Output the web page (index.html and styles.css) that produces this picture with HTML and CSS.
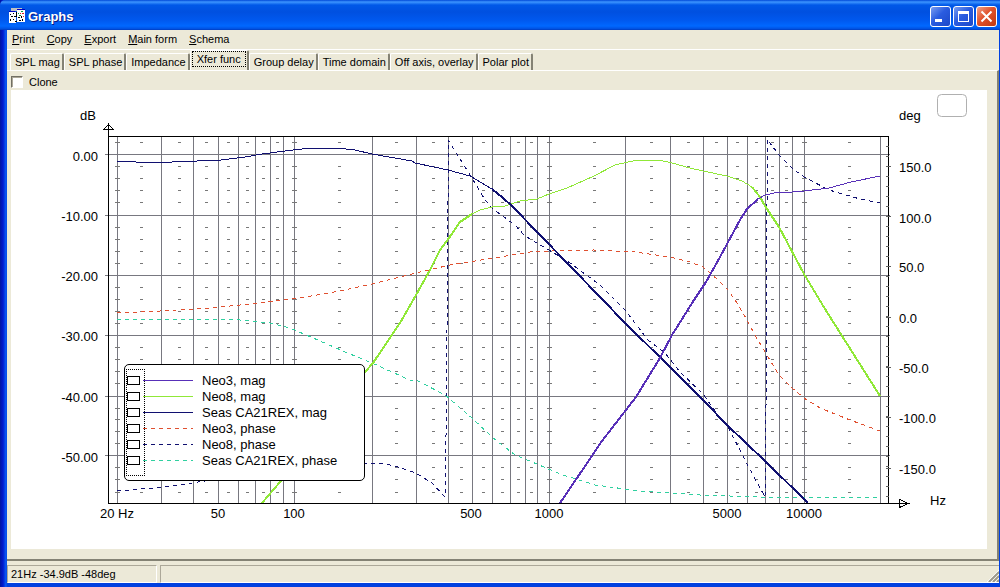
FILE: index.html
```html
<!DOCTYPE html>
<html lang="en">
<head>
    <meta charset="UTF-8">
    <meta name="viewport" content="width=device-width, initial-scale=1.0">
    <title>Graphs</title>
    <link rel="stylesheet" href="styles.css">
</head>
<body>
    <div class="window">
        <header class="titlebar">
            <svg class="app-icon" width="16" height="16" viewBox="0 0 16 16" shape-rendering="crispEdges">
                <path fill="#c0c0c0" d="M2 0h11v3H2z"/>
                <path fill="#fff" d="M0 4h7v11H0zM8 2h8v12H8z"/>
                <path fill="#0000c0" d="M0 3h6v1H0zM8 1h8v1H8z"/>
                <path fill="#000" d="M1 6h1v1H1zM4 5h1v1H4zM2 8h2v1H2zM5 8h2v1H5zM1 11h1v2H1zM4 11h1v1H4zM6 13h2v1H6zM7 4h1v5H7zM9 9h2v1H9zM12 8h1v2H12zM10 12h2v1h-2zM13 11h1v2h-1z"/>
                <path fill="#00a040" d="M9 5h1v1H9zM12 3h2v1h-2zM10 7h2v1h-2z"/>
                <path fill="#e02020" d="M11 5h1v1h-1zM13 5h2v1h-2zM14 8h1v1h-1z"/>
            </svg>
            <h1>Graphs</h1>
            <div class="window-buttons">
                <button type="button" aria-label="Minimize">
                    <svg width="19" height="19" viewBox="0 0 19 19"><path fill="#fff" d="M4 12h7v3H4z"/></svg>
                </button>
                <button type="button" aria-label="Maximize">
                    <svg width="19" height="19" viewBox="0 0 19 19"><path fill="#fff" fill-rule="evenodd" d="M4 4h11v11H4zM5 7v7h9V7z"/></svg>
                </button>
                <button type="button" class="close" aria-label="Close">
                    <svg width="19" height="19" viewBox="0 0 19 19"><path stroke="#fff" stroke-width="2" d="M4.5 4.5l10 10M14.5 4.5l-10 10"/></svg>
                </button>
            </div>
        </header>

        <nav class="menu">
            <button type="button"><u>P</u>rint</button>
            <button type="button"><u>C</u>opy</button>
            <button type="button"><u>E</u>xport</button>
            <button type="button"><u>M</u>ain form</button>
            <button type="button"><u>S</u>chema</button>
        </nav>

        <div class="tabs" role="tablist">
            <button type="button" role="tab">SPL mag</button>
            <button type="button" role="tab">SPL phase</button>
            <button type="button" role="tab">Impedance</button>
            <button type="button" role="tab" class="selected" aria-selected="true"><span>Xfer func</span></button>
            <button type="button" role="tab">Group delay</button>
            <button type="button" role="tab">Time domain</button>
            <button type="button" role="tab">Off axis, overlay</button>
            <button type="button" role="tab">Polar plot</button>
        </div>

        <main class="pane">
            <div class="clone">
                <input type="checkbox" id="clone">
                <label for="clone">Clone</label>
            </div>

            <div class="chart">
                <svg class="plot" viewBox="11 90 976 459">
                    <rect class="stub" x="937.5" y="94.5" width="29" height="22" rx="4"/>

                    <!-- log frequency grid -->
                    <path class="grid" d="M117.5 136v367M161.5 136v367M193.5 136v367M218.5 136v367M238.5 136v367M255.5 136v367M270.5 136v367M283.5 136v367M294.5 136v367M372.5 136v367M416.5 136v367M448.5 136v367M472.5 136v367M492.5 136v367M510.5 136v367M525.5 136v367M537.5 136v367M549.5 136v367M625.5 136v367M670.5 136v367M703.5 136v367M727.5 136v367M747.5 136v367M765.5 136v367M779.5 136v367M792.5 136v367M804.5 136v367M880.5 136v367"/>
                    <path class="grid" d="M105 154.5h785M105 215.5h785M105 275.5h785M105 335.5h785M105 396.5h785M105 455.5h785"/>
                    <path class="minor" d="M141.5 142v351M179.5 142v351M206.5 142v351M228.5 142v351M247.5 142v351M263.5 142v351M277.5 142v351M339.5 142v351M396.5 142v351M433.5 142v351M461.5 142v351M483.5 142v351M502.5 142v351M518.5 142v351M531.5 142v351M594.5 142v351M651.5 142v351M688.5 142v351M716.5 142v351M737.5 142v351M756.5 142v351M772.5 142v351M786.5 142v351M849.5 142v351"/>
                    <path class="minor wide" d="M117.5 142v351M294.5 142v351M549.5 142v351M804.5 142v351"/>

                    <!-- axes -->
                    <path class="axis" d="M108 136.5h781M108.5 123v380M888.5 136v367M108 503.5h801"/>
                    <path class="axis" d="M108.5 124.5l5 5h-10zM899.5 499.5l9 4l-9 4z"/>
                    <path class="degrees" d="M887.5 146v352"/>
                    <path class="degrees major" d="M888.5 166v303"/>

                    <!-- phase -->
                    <polyline class="neo3 phase" points="117,313 160,311 210,308 250,304 300,298 340,291 372,284 416,273 450,265 500,257 530,252 549,251 594,250 635,252 670,257 690,262 703,267 717,279 728,290 737,303 747,320 755,335 765,352 779,375 792,388 804,398 820,408 850,420 880,431"/>
                    <polyline class="neo8-phase phase" points="117,491 165,487 205,481 225,478 280,469 330,464 365,463 380,463 395,466 416,473 432,483 445,497 446,437 447,330 448,200 448,140 460,159 472,178 485,200 493,209 515,225 525,236 537,243 549,250 570,263 600,285 625,310 648,340 665,353 680,372 703,394 718,415 727,425 747,464 765,497 766,405 767,200 767,139 779,155 792,168 804,177 829,190 860,199 880,203"/>
                    <polyline class="seas-phase phase" points="117,319 210,319 240,320 270,323 290,328 320,341 350,354 372,363 412,381 416,380 445,395 472,418 492,437 515,455 537,464 560,474 595,485 640,491 700,495 760,497 880,497"/>

                    <!-- magnitude, the steep parts are drawn heavier -->
                    <polyline class="neo8-mag" points="472,214 480,210 492,207 505,206 520,201 537,199 549,194 567,188 594,176 615,165 637,160 659,160 672,163 690,168 703,171 727,176 742,181 752,187"/>
                    <polyline class="neo8-mag heavy" points="262,503 280,482 330,416 365,372 373,363 400,323 416,295 430,270 440,250 449,238 460,222 472,214"/>
                    <polyline class="neo8-mag heavy" points="752,187 760,197 765,206 779,227 804,274 822,304 832,320 880,396"/>
                    <polyline class="seas-mag" points="117,161 135,161 136,162 172,162 197,161 221,160 245,157 262,154 285,151 310,148 337,148 355,150 372,154 412,161 415,163 448,170 470,176 492,189"/>
                    <polyline class="seas-mag heavy" points="492,189 503,198 512,206 540,235 602,299 625,323 670,367 703,400 727,425 765,461 808,503"/>
                    <polyline class="neo3-mag heavy" points="560,503 577,478 602,441 636,397 660,358 672,335 694,300 706,282 720,257 740,220 747,209 758,199"/>
                    <polyline class="neo3-mag" points="758,199 765,195 779,192 792,192 804,191 829,188 851,182 880,176"/>

                    <g class="labels">
                        <text x="80" y="120">dB</text>
                        <text x="899" y="120">deg</text>
                        <text x="930" y="505">Hz</text>
                    </g>
                    <g class="labels end">
                        <text x="98" y="161">0.00</text>
                        <text x="98" y="221">-10.00</text>
                        <text x="98" y="281">-20.00</text>
                        <text x="98" y="341">-30.00</text>
                        <text x="98" y="402">-40.00</text>
                        <text x="98" y="462">-50.00</text>
                    </g>
                    <g class="labels">
                        <text x="899" y="172">150.0</text>
                        <text x="899" y="223">100.0</text>
                        <text x="899" y="272">50.0</text>
                        <text x="899" y="323">0.0</text>
                        <text x="899" y="373">-50.0</text>
                        <text x="899" y="423">-100.0</text>
                        <text x="899" y="474">-150.0</text>
                    </g>
                    <g class="labels middle">
                        <text x="117" y="518">20 Hz</text>
                        <text x="218" y="518">50</text>
                        <text x="294" y="518">100</text>
                        <text x="471" y="518">500</text>
                        <text x="549" y="518">1000</text>
                        <text x="727" y="518">5000</text>
                        <text x="804" y="518">10000</text>
                    </g>
                </svg>

                <div class="legend">
                    <label><input type="checkbox"><i class="line purple"></i>Neo3, mag</label>
                    <label><input type="checkbox"><i class="line green"></i>Neo8, mag</label>
                    <label><input type="checkbox"><i class="line navy"></i>Seas CA21REX, mag</label>
                    <label><input type="checkbox"><i class="line dashed orange"></i>Neo3, phase</label>
                    <label><input type="checkbox"><i class="line dashed navy"></i>Neo8, phase</label>
                    <label><input type="checkbox"><i class="line dashed teal"></i>Seas CA21REX, phase</label>
                </div>
            </div>
        </main>

        <footer class="statusbar">
            <div class="status">21Hz -34.9dB -48deg</div>
            <div class="status fill">
                <svg width="12" height="12" viewBox="0 0 12 12"><path stroke="#fff" d="M0 12L12 0M4 12l8-8M8 12l4-4"/><path stroke="#9d9a8a" stroke-width="2" d="M2 12L12 2M6 12l6-6M10 12l2-2"/></svg>
            </div>
        </footer>
    </div>
</body>
</html>
```
FILE: styles.css
```css
* {
    box-sizing: border-box;
}
body {
    margin: 0;
    background-color: #0a246a;
    font-family: "Liberation Sans", Arial, sans-serif;
    font-size: 11px;
    color: #000;
}
button {
    margin: 0;
    padding: 0;
    border: none;
    background: none;
    font: inherit;
    color: inherit;
}
.window {
    display: flex;
    flex-direction: column;
    min-height: 100vh;
    background-color: #ece9d8;
    border-style: solid;
    border-width: 0 1px 4px 7px;
    border-image: linear-gradient(to right, #0014a0 0, #0019cf 3px, #0a5cf5 6px, #0040e0 7px) 0 1 4 7;
}

/* title bar */
.titlebar {
    display: flex;
    align-items: center;
    height: 30px;
    margin: 0 -1px 0 -7px;
    padding: 2px 3px 0 9px;
    background: linear-gradient(#0048d8 0, #3d95ff 2px, #0058e8 5px, #0050e0 12px, #0058ee 20px, #0068ff 26px, #0050e0 29px, #0038b8 30px);
    border-radius: 5px 0 0 0;
}
.titlebar h1 {
    flex: 1;
    margin: 2px 0 0 3px;
    font-size: 13px;
    line-height: 16px;
    color: #fff;
    text-shadow: 1px 1px #0a1883;
}
.window-buttons {
    display: flex;
    gap: 2px;
}
.window-buttons button {
    width: 21px;
    height: 21px;
    border: 1px solid #fff;
    border-radius: 3px;
    background: linear-gradient(135deg, #7a9df0, #2a5ce0 45%, #1c48c8);
}
.window-buttons .close {
    background: linear-gradient(135deg, #f0a088, #e0522c 45%, #c03810);
}
.window-buttons svg {
    display: block;
}

/* menu */
.menu {
    display: flex;
    align-items: center;
    gap: 12px;
    height: 20px;
    padding: 0 0 2px 5px;
    border-bottom: 1px solid #fff;
}

/* tabs */
.tabs {
    display: flex;
    align-items: flex-end;
    height: 20px;
    padding-left: 3px;
}
.tabs button {
    height: 17px;
    padding: 0 2px 1px 4px;
    border-top: 1px solid #fff;
    border-left: 1px solid #fff;
    border-right: 2px solid #848274;
    border-radius: 2px 2px 0 0;
    line-height: 16px;
}
.tabs .selected {
    height: 20px;
    padding: 0 1px 3px 1px;
}
.tabs .selected span {
    display: block;
    padding: 0 4px;
    border: 1px dotted #000;
    line-height: 14px;
}

/* page */
.pane {
    flex: 1;
    padding: 0 10px 10px 4px;
    border-top: 1px solid #fff;
    border-right: 2px solid #848274;
    border-bottom: 2px solid #848274;
}
.clone {
    display: flex;
    align-items: center;
    gap: 6px;
    height: 19px;
    padding-top: 2px;
}
.clone input {
    appearance: none;
    width: 12px;
    height: 12px;
    margin: 0;
    background-color: #fff;
    border: 1px solid;
    border-color: #716f64 #fff #fff #716f64;
    box-shadow: inset 1px 1px #aca899;
}
.chart {
    position: relative;
    background-color: #fff;
    font-size: 13px;
}
.plot {
    display: block;
    width: 100%;
    fill: none;
    shape-rendering: crispEdges;
}
.stub {
    stroke: #b0b0b0;
    shape-rendering: auto;
}
.grid {
    stroke: #787880;
}
.minor {
    stroke: #787878;
    stroke-width: 3px;
    stroke-dasharray: 1 23 1 11 1 11 1 11 1 24 1 11 1 11 1 11 1 23 1 11 1 11 1 11 1 23 1 11 1 11 1 11 1 24 1 10 1 11 1 11 1 23 1 11 1 12 1 99;
}
.wide {
    stroke-width: 5px;
}
.axis {
    stroke: #000;
}
.degrees {
    stroke: #606060;
    stroke-width: 3px;
    stroke-dasharray: 1 9;
}
.degrees.major {
    stroke-width: 5px;
    stroke-dasharray: 1 49 1 49 1 50;
}
.phase {
    stroke-dasharray: 4 4;
}
.heavy {
    stroke-width: 2px;
}
.neo3 {
    stroke: #e05030;
}
.neo3-mag {
    stroke: #5830b8;
}
.neo8-mag {
    stroke: #90e838;
}
.neo8-phase, .seas-mag {
    stroke: #101070;
}
.seas-phase {
    stroke: #30d0a0;
}
.labels {
    fill: #000;
}
.end {
    text-anchor: end;
}
.middle {
    text-anchor: middle;
}

/* legend */
.legend {
    position: absolute;
    left: 113px;
    top: 274px;
    width: 241px;
    padding: 7px 0 12px 2px;
    background-color: #fff;
    border: 1px solid #000;
    border-radius: 5px;
}
.legend::before {
    content: "";
    position: absolute;
    left: 1px;
    top: 4px;
    bottom: 4px;
    width: 17px;
    border: 1px dotted #000;
}
.legend label {
    position: relative;
    display: flex;
    align-items: center;
    height: 16px;
}
.legend input {
    appearance: none;
    width: 13px;
    height: 9px;
    margin: 0 3px 0 0;
    background-color: #fff;
    border: 1px solid #000;
}
.line {
    width: 50px;
    height: 1px;
    margin-right: 9px;
    background-color: currentColor;
}
.dashed {
    background: repeating-linear-gradient(to right, currentColor 0 4px, transparent 4px 8px);
}
.purple {
    color: #5830b8;
}
.green {
    color: #90e838;
}
.navy {
    color: #101070;
}
.orange {
    color: #e05030;
}
.teal {
    color: #30d0a0;
}

/* status bar */
.statusbar {
    display: flex;
    gap: 3px;
    padding-top: 4px;
}
.status {
    width: 150px;
    height: 18px;
    padding-left: 3px;
    border: 1px solid;
    border-color: #aca899 #fff #fff #aca899;
    line-height: 17px;
}
.fill {
    display: flex;
    flex: 1;
    justify-content: flex-end;
    align-items: flex-end;
    border-right: none;
}
```
